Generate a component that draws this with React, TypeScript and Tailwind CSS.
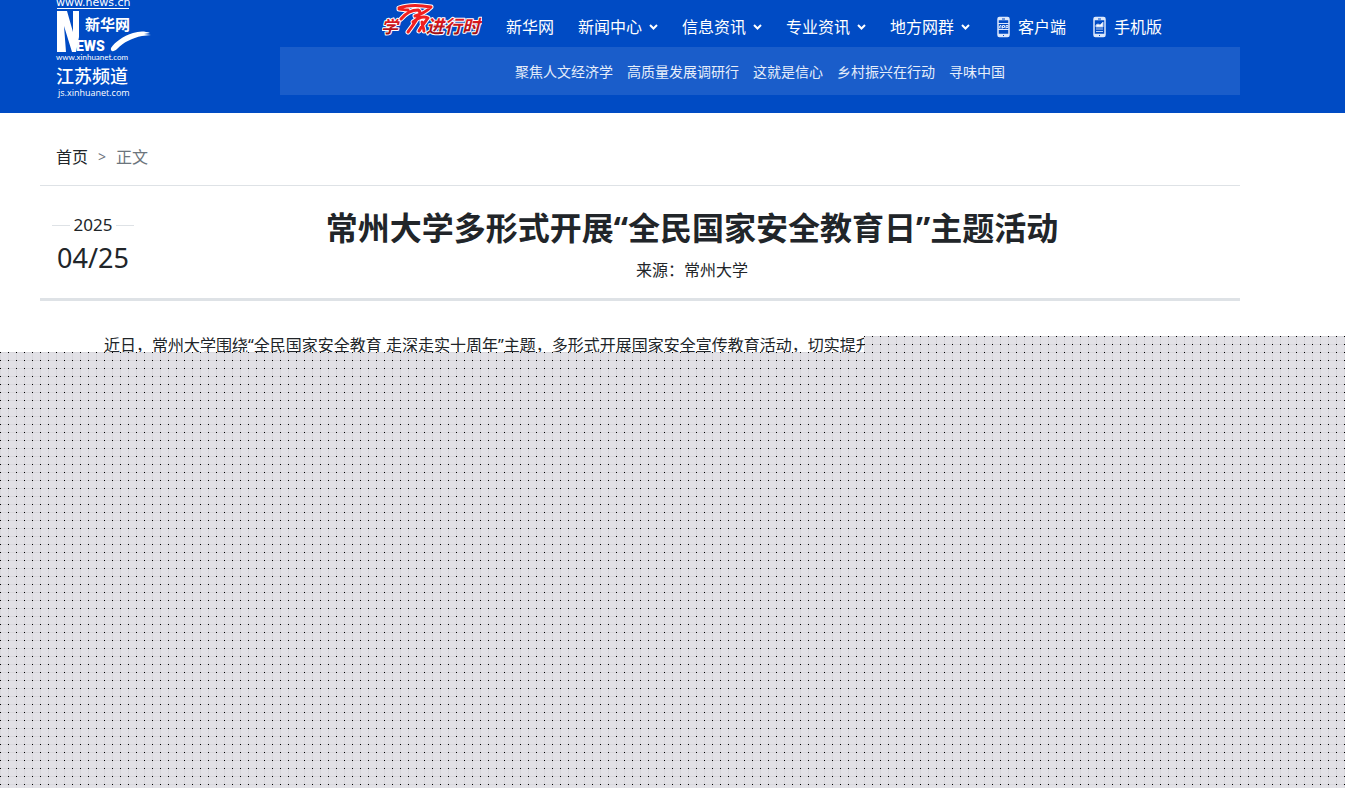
import type { ReactNode } from "react"

type NavItem = {
  label: string
  hasMenu?: boolean
  icon?: "app" | "mobile"
}

const navItems: NavItem[] = [
  { label: "新华网" },
  { label: "新闻中心", hasMenu: true },
  { label: "信息资讯", hasMenu: true },
  { label: "专业资讯", hasMenu: true },
  { label: "地方网群", hasMenu: true },
  { label: "客户端", icon: "app" },
  { label: "手机版", icon: "mobile" },
]

const topics = ["聚焦人文经济学", "高质量发展调研行", "这就是信心", "乡村振兴在行动", "寻味中国"]

// Grey dotted area, 8px grid
const dots =
  "bg-[#e2e1e6] bg-[radial-gradient(circle_at_0.5px_0.5px,#000_0.7px,transparent_0.8px),linear-gradient(#d8d7dc_1px,transparent_1px),linear-gradient(90deg,#d8d7dc_1px,transparent_1px)] bg-size-[8px_8px]"

function Logo() {
  return (
    <a href="#" aria-label="新华网江苏频道" className="block h-[100px] w-[104px] shrink-0">
      <svg viewBox="0 0 104 100" className="h-[100px] w-[104px] overflow-visible" fill="#fff">
        <text x="4" y="6" fontSize="11" fontFamily="'DejaVu Sans'">
          www.news.cn
        </text>
        <rect x="5" y="8" width="72" height="1" />
        {/* N */}
        <path d="M5 11h10l6 21V11h6v26l-3 15h-4L12 26l2 26H5z" />
        <text x="33" y="30" fontSize="15" fontWeight="700" fontFamily="'Noto Sans CJK SC'">
          新华网
        </text>
        <text x="24" y="51" fontSize="14" fontWeight="900" fontFamily="Roboto">
          EWS
        </text>
        {/* swoosh */}
        <path d="M59 48c4-6 12-12 22-15 6-2 12-2 17 0l-6 1 7 1-9 1c-10 2-18 6-25 13-3 3-7 3-6-1z" />
        <text x="4" y="60" fontSize="8" fontFamily="Lato">
          www.xinhuanet.com
        </text>
        <text x="4" y="83" fontSize="18" fontWeight="500" fontFamily="'Noto Sans CJK SC'">
          江苏频道
        </text>
        <text x="6" y="96" fontSize="9" fontFamily="'Open Sans'">
          js.xinhuanet.com
        </text>
      </svg>
    </a>
  )
}

function StudyLogo() {
  const brush =
    "M17 8c8-3 21-3 32-1-4 4-9 7-16 9M17 9l9 1M19 19c5-6 11-9 17-9 3 1 2 5-1 9-3 5-6 9-9 13M31 22c5-4 11-6 15-4-2 3-6 7-9 13M40 22c0 4 2 6 2 9"
  return (
    <a href="#" aria-label="学习进行时" className="block h-[47px] w-[100px]">
      <svg viewBox="0 0 100 47" className="h-[47px] w-[100px]">
        <defs>
          <linearGradient id="study-red" x1="0" y1="0" x2="0" y2="1">
            <stop offset="0.3" stopColor="#e01a20" />
            <stop offset="1" stopColor="#8a0a10" />
          </linearGradient>
        </defs>
        <g
          fill="url(#study-red)"
          stroke="#fff"
          strokeWidth="2"
          strokeLinejoin="round"
          paintOrder="stroke"
          fontFamily="'Noto Sans CJK SC'"
          fontWeight="700"
          fontStyle="italic"
        >
          <text x="-1" y="33" fontSize="17">
            学
          </text>
          <text x="44" y="33" fontSize="18">
            进行时
          </text>
        </g>
        <g fill="none" strokeLinecap="round" strokeLinejoin="round">
          <path d={brush} stroke="#fff" strokeWidth="5" />
          <path d={brush} stroke="#f02020" strokeWidth="3" />
        </g>
      </svg>
    </a>
  )
}

function PhoneIcon({ type }: { type: "app" | "mobile" }) {
  return (
    <svg viewBox="0 0 24 22" className="h-[22px] w-6 shrink-0" fill="none">
      <rect x="4" y="1.5" width="11" height="19" rx="1.5" stroke="#dce8fc" strokeWidth="1.5" />
      <path d="M4 3h11M4 19h11" stroke="#dce8fc" strokeWidth="2.5" />
      <path d="M8 3h3M9 19.5h1" stroke="#004bc4" />
      {type === "app" ? (
        <g stroke="#dce8fc">
          <path d="M4 7.5h11M4 13.5h11" />
          <path d="M5 12.5l1-3h1v3M8.5 12.5v-3h2v2h-2M12 12.5v-3h2v2h-2" />
        </g>
      ) : (
        <path d="M6 11V9l2-1 2 1 3-3v5zM6 13h7M6 15.5h7" fill="#fff" stroke="#b8cef2" />
      )}
    </svg>
  )
}

function DateRow({ children }: { children: ReactNode }) {
  return (
    <div className="flex items-center gap-1">
      <span className="h-px w-[18px] bg-[#dee2e6]" />
      <span className="text-[17px] leading-6">{children}</span>
      <span className="h-px w-[18px] bg-[#dee2e6]" />
    </div>
  )
}

export default function App() {
  return (
    <div className="flex min-h-screen flex-col bg-white font-['Noto_Sans','Noto_Sans_CJK_SC',sans-serif] text-[#212529]">
      <header className="h-[113px] bg-[#004bc4] text-white">
        <div className="mx-10 flex max-w-[1200px] justify-between pl-3">
          <Logo />
          <div className="w-[960px]">
            <nav className="flex h-[47px] items-center justify-center">
              <div className="pl-6">
                <StudyLogo />
              </div>
              {navItems.map((item) => (
                <a key={item.label} href="#" className="flex items-center pt-1.5 pl-6 text-base leading-6">
                  {item.icon && <PhoneIcon type={item.icon} />}
                  {item.label}
                  {item.hasMenu && (
                    <svg viewBox="0 0 16 8" className="h-2 w-4" fill="none" stroke="#fff" strokeWidth="2">
                      <path d="M8 2l3.5 3.5L15 2" />
                    </svg>
                  )}
                </a>
              ))}
            </nav>
            <nav className="flex h-12 items-center justify-center gap-3.5 bg-[#1a5dca] pt-0.5 text-sm text-[#e6eefa]">
              {topics.map((topic) => (
                <a key={topic} href="#">
                  {topic}
                </a>
              ))}
            </nav>
          </div>
        </div>
      </header>

      <main className="mx-10 max-w-[1200px]">
        <nav className="flex h-[73px] items-center gap-2.5 border-b border-[#dee2e6] px-4 pt-4 text-base leading-6">
          <a href="#">首页</a>
          <span className="text-sm text-[#6c757d]">&gt;</span>
          <span className="text-[#6c757d]">正文</span>
        </nav>

        <div className="flex h-[115px] border-b-[3px] border-[#dee2e6] pl-3">
          <div className="flex w-[82px] flex-col items-center pt-[27px]">
            <DateRow>2025</DateRow>
            <div className="text-[27px] leading-[42px]">04/25</div>
          </div>
          <div className="flex-1 pt-[22px] pl-[10px] text-center">
            <h1 className="text-[32px] leading-10 font-bold">常州大学多形式开展“全民国家安全教育日”主题活动</h1>
            <p className="mt-2.5 text-base leading-6">来源：常州大学</p>
          </div>
        </div>

        <article className="h-[51px] px-8 pt-[30px]">
          <p className="indent-8 text-base leading-7 whitespace-nowrap">
            近日，常州大学围绕“全民国家安全教育 走深走实十周年”主题，多形式开展国家安全宣传教育活动，切实提升
          </p>
        </article>
      </main>

      <div className={`relative flex-1 ${dots}`}>
        <div className={`absolute -top-4 right-0 left-[864px] h-4 ${dots}`} />
      </div>
    </div>
  )
}
